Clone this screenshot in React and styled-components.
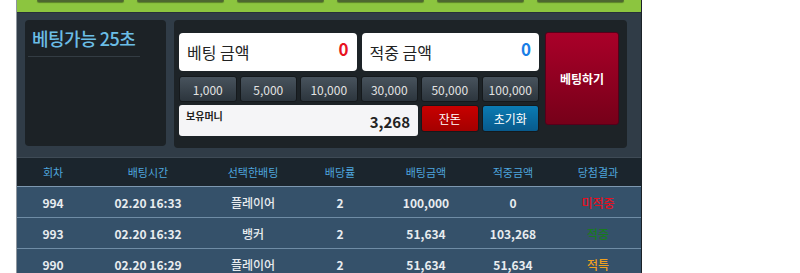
import styled, { createGlobalStyle } from "styled-components";

const GlobalStyle = createGlobalStyle`
  body {
    margin: 0;
    background: #ffffff;
    font-family: "Noto Sans CJK KR", "Noto Sans", sans-serif;
  }
`;

const Wrapper = styled.div`
  margin-left: 16px;
  width: 626px;
  box-sizing: border-box;
  border-left: 1px solid #8e969e;
  border-right: 1px solid #1b2228;
  background: #303c47;
`;

const TopBar = styled.div`
  height: 12px;
  background: #8cc53f;
  border-bottom: 1px solid #26303a;
  display: flex;
  gap: 13px;
  padding-left: 20px;
`;

const TopTab = styled.div`
  width: 87px;
  height: 2px;
  background: #4d6630;
  border-radius: 0 0 3px 3px;
  box-shadow: 0 1px 1px rgba(40, 60, 20, 0.5);
`;

const Body = styled.div`
  display: flex;
  align-items: flex-start;
  gap: 8px;
  padding: 7px 0 9px 8px;
  border-bottom: 1px solid #3f4b56;
`;

const TimerPanel = styled.div`
  width: 141px;
  height: 126px;
  background: #1c2226;
  border-radius: 4px;
  padding: 3px 3px 0;
  box-sizing: border-box;
`;

const TimerTitle = styled.div`
  color: #6bbde6;
  font-size: 18px;
  font-weight: 500;
  line-height: 30px;
  padding: 0 0 3px 4px;
  border-bottom: 1px solid #333c43;
  width: 108px;
  letter-spacing: -0.5px;
`;

const BetPanel = styled.div`
  width: 453px;
  height: 128px;
  background: #1d2327;
  border-radius: 4px;
  display: flex;
  gap: 6px;
  padding: 13px 8px 0 5px;
  box-sizing: border-box;
`;

const Controls = styled.div`
  width: 360px;
  display: flex;
  flex-direction: column;
`;

const AmountRow = styled.div`
  display: flex;
  gap: 5px;
  margin-bottom: 5px;
`;

const AmountBox = styled.div`
  flex: 1;
  height: 38px;
  background: #ffffff;
  border-radius: 4px;
  display: flex;
  align-items: center;
  justify-content: space-between;
  padding: 0 8px 0 8px;
  box-sizing: border-box;
  font-size: 16px;
  color: #222;
`;

const AmountValue = styled.span`
  color: ${(p) => p.$color};
  font-weight: 700;
  font-size: 17px;
  margin-bottom: 8px;
`;

const ChipRow = styled.div`
  display: grid;
  grid-template-columns: repeat(6, 1fr);
  gap: 3px;
  margin-bottom: 3px;
`;

const Chip = styled.button`
  height: 26px;
  padding: 0;
  border: 1px solid #15191c;
  border-radius: 3px;
  background: linear-gradient(#48535d, #2c353d);
  color: #e2e2e2;
  font-family: inherit;
  font-size: 12px;
  cursor: pointer;
`;

const BottomRow = styled.div`
  display: grid;
  grid-template-columns: repeat(6, 1fr);
  gap: 3px;
  align-items: start;
`;

const MoneyBox = styled.div`
  grid-column: span 4;
  height: 31px;
  background: #f5f5f7;
  border-radius: 3px;
  position: relative;
  box-sizing: border-box;
  display: flex;
  align-items: center;
  justify-content: flex-end;
  padding-right: 8px;
`;

const MoneyLabel = styled.span`
  position: absolute;
  left: 7px;
  top: 3px;
  font-size: 10px;
  font-weight: 700;
  color: #222;
`;

const MoneyValue = styled.span`
  font-size: 15px;
  font-weight: 700;
  color: #222;
  margin-top: 2px;
`;

const ActionButton = styled.button`
  height: 27px;
  padding: 0;
  border: 1px solid #15191c;
  border-radius: 3px;
  background: ${(p) => p.$bg};
  color: #ffffff;
  font-family: inherit;
  font-size: 12px;
  cursor: pointer;
`;

const SubmitButton = styled.button`
  width: 74px;
  height: 93px;
  margin-top: -1px;
  padding: 0;
  border: 1px solid #55001a;
  border-radius: 3px;
  background: linear-gradient(#aa0029, #760019);
  color: #ffffff;
  font-family: inherit;
  font-size: 12px;
  font-weight: 700;
  cursor: pointer;
`;

const Table = styled.div`
  display: grid;
  grid-template-columns: 72px 118px 92px 82px 90px 84px 86px;
`;

const HeadCell = styled.div`
  height: 28px;
  background: #1b252d;
  color: #4ea6de;
  font-size: 11px;
  display: flex;
  align-items: center;
  justify-content: center;
  border-bottom: 1px solid #7d98b0;
`;

const Cell = styled.div`
  height: 30px;
  background: #35516a;
  color: ${(p) => p.$color || "#e8ecef"};
  font-size: 12px;
  font-weight: ${(p) => p.$weight || 700};
  display: flex;
  align-items: center;
  justify-content: center;
  border-bottom: 1px solid #6f8ca5;
`;

const headers = ["회차", "배팅시간", "선택한배팅", "배당률", "배팅금액", "적중금액", "당첨결과"];

const rows = [
  { round: "994", time: "02.20 16:33", pick: "플레이어", odds: "2", bet: "100,000", win: "0", result: "미적중", color: "#e8101f" },
  { round: "993", time: "02.20 16:32", pick: "뱅커", odds: "2", bet: "51,634", win: "103,268", result: "적중", color: "#1a7a20" },
  { round: "990", time: "02.20 16:29", pick: "플레이어", odds: "2", bet: "51,634", win: "51,634", result: "적특", color: "#f0a020" },
];

const chips = ["1,000", "5,000", "10,000", "30,000", "50,000", "100,000"];

export default function App() {
  return (
    <>
      <GlobalStyle />
      <Wrapper>
        <TopBar>
          {[0, 1, 2, 3, 4, 5].map((i) => (
            <TopTab key={i} />
          ))}
        </TopBar>
        <Body>
          <TimerPanel>
            <TimerTitle>베팅가능 25초</TimerTitle>
          </TimerPanel>
          <BetPanel>
            <Controls>
              <AmountRow>
                <AmountBox>
                  <span>베팅 금액</span>
                  <AmountValue $color="#e8131f">0</AmountValue>
                </AmountBox>
                <AmountBox>
                  <span>적중 금액</span>
                  <AmountValue $color="#1a7ee6">0</AmountValue>
                </AmountBox>
              </AmountRow>
              <ChipRow>
                {chips.map((c) => (
                  <Chip key={c}>{c}</Chip>
                ))}
              </ChipRow>
              <BottomRow>
                <MoneyBox>
                  <MoneyLabel>보유머니</MoneyLabel>
                  <MoneyValue>3,268</MoneyValue>
                </MoneyBox>
                <ActionButton $bg="linear-gradient(#c80000, #a40000)">잔돈</ActionButton>
                <ActionButton $bg="linear-gradient(#0b7bb3, #085a8c)">초기화</ActionButton>
              </BottomRow>
            </Controls>
            <SubmitButton>베팅하기</SubmitButton>
          </BetPanel>
        </Body>
        <Table>
          {headers.map((h) => (
            <HeadCell key={h}>{h}</HeadCell>
          ))}
          {rows.map((r) => [
            <Cell key={r.round + "a"}>{r.round}</Cell>,
            <Cell key={r.round + "b"}>{r.time}</Cell>,
            <Cell key={r.round + "c"} $weight={500}>{r.pick}</Cell>,
            <Cell key={r.round + "d"}>{r.odds}</Cell>,
            <Cell key={r.round + "e"}>{r.bet}</Cell>,
            <Cell key={r.round + "f"}>{r.win}</Cell>,
            <Cell key={r.round + "g"} $color={r.color} $weight={500}>{r.result}</Cell>,
          ])}
        </Table>
      </Wrapper>
    </>
  );
}
